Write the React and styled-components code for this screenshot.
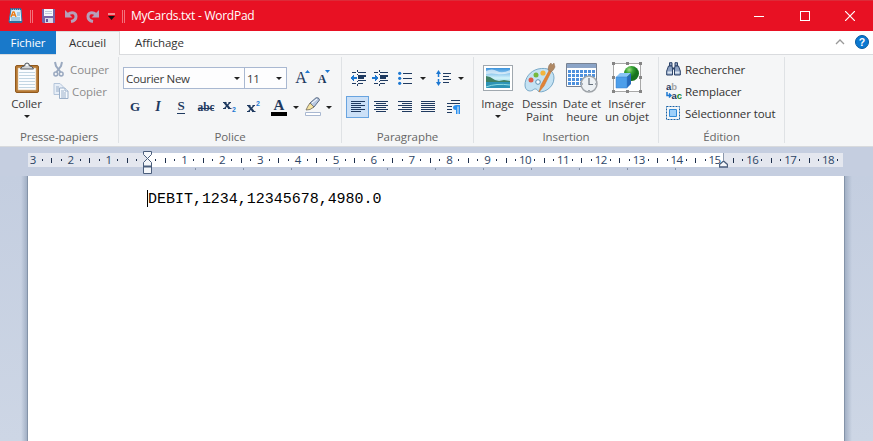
import React from 'react';
import styled, { createGlobalStyle } from 'styled-components';

const GlobalStyle = createGlobalStyle`
  * { box-sizing: border-box; }
  html, body { margin: 0; padding: 0; overflow: hidden; }
  body { font-family: "Open Sans", "Noto Sans", sans-serif; font-size: 11.5px; letter-spacing: -0.08px; color: #3b3b3b; }
  svg { display: block; flex: none; letter-spacing: 0; }
`;

const Window = styled.div`
  width: 873px;
  height: 441px;
  display: flex;
  flex-direction: column;
  overflow: hidden;
  background: #c5cfe0;
`;

const TitleBar = styled.header`
  height: 31px;
  flex: none;
  display: flex;
  align-items: center;
  background: #e81123;
  border-top: 1px solid #dd2b38;
  padding-left: 8px;
  color: #fff;
`;
const QuickIcon = styled.span`
  margin-left: ${p => p.$gap || 0}px;
`;
const Title = styled.span`
  margin-left: 6px;
  font-size: 12px;
  line-height: 16px;
  letter-spacing: -0.26px;
  white-space: nowrap;
`;
const WindowButtons = styled.div`
  margin-left: auto;
  display: flex;
`;
const WindowButton = styled.button`
  width: ${p => p.$w || 46}px;
  height: 28px;
  padding: 0;
  border: 0;
  background: none;
  display: flex;
  align-items: center;
  justify-content: center;
`;

const TabBar = styled.nav`
  height: 24px;
  flex: none;
  display: flex;
  background: #fff;
  border-bottom: 1px solid #d9dbde;
`;
const Tab = styled.div`
  width: ${p => p.$w}px;
  height: ${p => (p.$kind === 'active' ? 24 : 23)}px;
  text-align: center;
  line-height: ${p => (p.$kind === 'active' ? 21 : 23)}px;
  white-space: nowrap;
  color: ${p => (p.$kind === 'file' ? '#fff' : '#333')};
  background: ${p => ({ file: '#1979ca', active: '#f5f6f7' }[p.$kind] || 'transparent')};
  border: 0 solid #dadbdc;
  border-width: ${p => (p.$kind === 'active' ? '1px 1px 0 0' : 0)};
`;
const TabTools = styled.div`
  margin-left: auto;
  display: flex;
  align-items: center;
  gap: 10px;
  padding: 0 4px 2px 0;
`;

const Ribbon = styled.section`
  height: 92px;
  flex: none;
  display: flex;
  background: #f5f6f7;
  border-bottom: 1px solid #d8dadd;
`;
const Group = styled.div`
  width: ${p => p.$w}px;
  height: 86px;
  margin-top: 2px;
  border-right: 1px solid #dfe2e5;
  display: flex;
  flex-direction: column;
`;
const GroupBody = styled.div`
  height: 71px;
  flex: none;
  display: flex;
  padding-left: ${p => p.$left || 0}px;
`;
const GroupName = styled.div`
  text-align: center;
  line-height: 18px;
  color: #666;
`;
const BigButton = styled.div`
  width: ${p => p.$w}px;
  padding-top: 5px;
  display: flex;
  flex-direction: column;
  align-items: center;
`;
const BigLabel = styled.div`
  margin-top: 3px;
  text-align: center;
  line-height: 13px;
  white-space: nowrap;
`;
const Arrow = styled.i`
  width: 0;
  height: 0;
  flex: none;
  margin-top: ${p => p.$top || 0}px;
  border: 3px solid transparent;
  border-top-color: #222;
  border-bottom: 0;
`;
const Commands = styled.div`
  display: flex;
  flex-direction: column;
  padding-top: 1px;
`;
const Command = styled.div`
  height: 22px;
  display: flex;
  align-items: center;
  gap: ${p => p.$gap}px;
  color: ${p => (p.$disabled ? '#8c8c8c' : '#333')};
  white-space: nowrap;
`;
const ToolRows = styled.div`
  display: flex;
  flex-direction: column;
  padding-top: 10px;
  gap: 7px;
`;
const ToolRow = styled.div`
  height: 22px;
  display: flex;
  align-items: center;
`;
const Combo = styled.div`
  width: ${p => p.$w}px;
  height: 22px;
  border: 1px solid #a9b8d1;
  border-left-width: ${p => (p.$joined ? 0 : 1)}px;
  background: #fdfdfe;
  display: flex;
  align-items: center;
  justify-content: space-between;
  padding: 0 4px 0 2px;
  letter-spacing: -0.3px;
`;
const Tool = styled.span`
  width: ${p => p.$w}px;
  height: 22px;
  display: flex;
  align-items: center;
  justify-content: center;
  background: ${p => (p.$on ? '#cbe0f7' : 'transparent')};
  outline: ${p => (p.$on ? '1px solid #68a4e0' : 'none')};
  outline-offset: -1px;
`;

const RulerArea = styled.div`
  height: 29px;
  flex: none;
  padding: 6px 30px 0 28px;
  background: #c5cee0;
  position: relative;
`;
const RulerStrip = styled.div`
  height: 14px;
  display: grid;
  grid-template-columns: repeat(86, 9.47px);
  align-items: center;
  justify-items: center;
  overflow: hidden;
  background: linear-gradient(90deg, #e4e7ef 119px, #fff 119px, #fff 696px, #e4e7ef 696px);
`;
const RulerNumber = styled.span`
  width: 20px;
  margin: 0 -6px;
  text-align: center;
  font-size: 11.5px;
  line-height: 14px;
  letter-spacing: -0.5px;
  color: #2d4566;
`;
const RulerMark = styled.span`
  width: 1px;
  height: ${p => (p.$long ? 5 : 2)}px;
  background: #1d2f4c;
`;
const TabStops = styled.div`
  display: flex;
  gap: 47px;
  padding: 1px 0 0 167px;
`;
const TabStop = styled.span`
  width: 1px;
  height: 2px;
  flex: none;
  background: #8794aa;
`;
const Marker = styled.span`
  position: absolute;
  left: ${p => p.$x}px;
  top: ${p => p.$y}px;
`;

const Desk = styled.main`
  flex: 1;
  display: flex;
  background: linear-gradient(#c4cee0, #cdd6e5);
`;
const Edge = styled.div`
  width: ${p => (p.$right ? 8 : 7)}px;
  margin-left: ${p => (p.$right ? 0 : 21)}px;
  background: linear-gradient(${p => (p.$right ? 270 : 90)}deg, rgba(120, 140, 170, 0), #a2b0c5);
  border: 0 solid #8493a8;
  border-width: ${p => (p.$right ? '0 0 0 1px' : '0 1px 0 0')};
`;
const Page = styled.div`
  width: 816px;
  padding: 14px 0 0 119px;
  background: #fff;
`;
const TextLine = styled.div`
  height: 17px;
  padding-top: 1px;
  display: flex;
  align-items: center;
  border-left: 1px solid #000;
  font: 15px/17px "Liberation Mono", "Courier New", monospace;
  letter-spacing: -0.02px;
  color: #000;
`;

const navy = '#1f3a60';
const blue = '#1d78d2';

const Lines = ({ rows }) => (
  <svg width="14" height="12" shapeRendering="crispEdges">
    {rows.map(([x, len], i) => <rect key={i} x={x} y={i * 2} width={len} height="1" fill={navy} />)}
  </svg>
);

const AppIcon = () => (
  <svg width="15" height="16" viewBox="0 0 15 16">
    <path d="M3 1h10l1 13H1z" fill="#deeffa" stroke="#347fae" />
    <path d="M2 1h11" stroke="#276e9b" strokeWidth="2" strokeDasharray="1 1" />
    <path d="M3 9l2-5h1l2 5M4 7h3" fill="none" stroke="#ee7c16" strokeWidth="1.3" />
    <path d="M9 5h3M9 7h3M3 10h9M3 12h9" stroke="#6ba7cf" />
    <path d="M1 14h13" stroke="#2d709c" strokeWidth="2" />
  </svg>
);
const Divider = () => (
  <svg width="3" height="13" shapeRendering="crispEdges"><path d="M.5 0v13M2.5 0v13" stroke="#f2727b" /></svg>
);
const SaveIcon = () => (
  <svg width="13" height="14" viewBox="0 0 13 14">
    <path d="M0 0h13v14H1L0 13z" fill="#7764a7" /><path d="M2 0h9v7H2z" fill="#f4f7fc" />
    <path d="M3 2.500h7M3 4.500h7" stroke="#c0cadb" /><path d="M3 9h8v5H3z" fill="#d7d9e8" /><path d="M4 10h2v3H4z" fill="#65539b" />
  </svg>
);
const UndoIcon = ({ flip }) => (
  <svg width="13" height="14" viewBox="0 0 13 14">
    <g transform={flip ? 'translate(13 0) scale(-1 1)' : undefined}>
      <path d="M3 5.500C7 2 11 4 11 7.500c0 3-2 4.500-5 5" fill="none" stroke="#b69fb9" strokeWidth="3" />
      <path d="M0 1v7.500h7.500z" fill="#b69fb9" />
    </g>
  </svg>
);
const MenuIcon = () => (
  <svg width="7" height="7"><path d="M0 1h7" stroke="#fff" /><path d="M0 3h7L3.500 7z" fill="#111" /></svg>
);

const PasteIcon = () => (
  <svg width="26" height="32" viewBox="0 0 26 32">
    <rect x="1.500" y="3.500" width="23" height="27" rx="1.500" fill="#b77a34" stroke="#91591e" />
    <path d="M4 6h18v22H4z" fill="#fbfdff" stroke="#dac19b" strokeWidth=".6" />
    <path d="M5 10.500h16M5 13.500h16M5 16.500h16M5 19.500h16M5 22.500h16M5 25.500h16" stroke="#c3d6e3" />
    <path d="M6.500 7q1-3 4-3 0-3 2.500-3t2.500 3q3 0 4 3z" fill="#d3d6d9" stroke="#545b62" />
    <circle cx="13" cy="3" r="1" fill="#fff" />
  </svg>
);
const CutIcon = () => (
  <svg width="11" height="16" viewBox="0 0 11 16" fill="none" stroke="#9aa9c0">
    <path d="M2 1l1 4 4.500 6M9 1L8 5l-4.500 6" strokeWidth="2" />
    <circle cx="2.800" cy="13" r="1.900" strokeWidth="1.500" /><circle cx="8.200" cy="13" r="1.900" strokeWidth="1.500" />
  </svg>
);
const CopyIcon = () => (
  <svg width="16" height="16" viewBox="0 0 16 16" stroke="#9bb0ca" fill="#f5f9fd">
    <path d="M1 .500h6l3 3v8H1z" fill="#e7eef7" stroke="#b4c5da" /><path d="M3 4h3M3 6h4M3 8h3" />
    <path d="M6.500 5h5.500l3 3v7.500H6.500z" /><path d="M12 5v3h3M8 8h3M8 10h5M8 12h5M8 14h5" />
  </svg>
);
const Letter = ({ ch, w = 18, size = 13, bold = 700, italic, line, y = 14, x, children }) => (
  <svg width={w} height="20">
    <text x={x ?? w / 2} y={y} textAnchor="middle" fontFamily="Liberation Serif" fontSize={size} fontWeight={bold} fontStyle={italic ? 'italic' : 'normal'} fill={navy}>{ch}</text>
    {line && <path d={line} stroke={navy} />}
    {children}
  </svg>
);
const ScriptIcon = ({ up }) => (
  <svg width="14" height="20" viewBox="0 0 14 20">
    <g transform={`translate(0 ${up ? 8 : 5})`} stroke={navy}>
      <path d="M1.500 .500l5 6" strokeWidth="2" /><path d="M7 .500l-5.500 6" strokeWidth="1.200" />
      <path d="M0 .500h3.500M5.500 .500H8M0 6.500h3M5 6.500h3.500" />
    </g>
    <text x="9" y={up ? 9 : 15} fontFamily="Liberation Sans" fontSize="7" fontWeight="700" fill={blue}>2</text>
  </svg>
);
const PenIcon = () => (
  <svg width="18" height="20" viewBox="0 0 18 20">
    <path d="M6 6L12 .800q3-.800 3.500 2.200L10 10l-4 1z" fill="#b9c9e2" stroke="#5a6b85" />
    <path d="M8 6l5-4" stroke="#fff" />
    <path d="M6 6l4 4-4 2.500-4 .500L4 9z" fill="#f5e3a2" stroke="#716a56" strokeWidth=".8" />
    <path d="M1.500 15.500h15v3h-15z" fill="#fff" stroke="#a9b8d1" />
  </svg>
);
const IndentIcon = ({ right }) => (
  <svg width="17" height="16" viewBox="0 0 17 16" shapeRendering="crispEdges">
    <path d="M2 2.500h4M8 2.500h8M8 10.500h8M2 13.500h4M8 13.500h5" stroke={navy} />
    <path d="M8 5.500h8M8 8h6" stroke={navy} strokeWidth="2" /><path d="M7.500 0v2M7.500 4v1M7.500 11v1M7.500 14v2" stroke={navy} />
    <path d={right ? 'M0 8h5' : 'M2 8h5'} stroke={blue} strokeWidth="2" />
    <path d={right ? 'M3 4.500L7 8l-4 3.500z' : 'M4 4.500L0 8l4 3.500z'} fill={blue} />
  </svg>
);
const BulletIcon = () => (
  <svg width="15" height="14"><path d="M5 2.500h9M5 7.500h9M5 12.500h9" stroke={navy} />
    {[2, 7, 12].map(y => <circle key={y} cx="1.700" cy={y + .3} r="1.600" fill={blue} />)}</svg>
);
const SpacingIcon = () => (
  <svg width="16" height="16"><path d="M7 3.500h8M7 6.500h6M7 9.500h8M7 12.500h6" stroke={navy} />
    <path d="M2.500 3v10" stroke={blue} strokeWidth="1.500" strokeDasharray="4 2" /><path d="M2.500 0L0 4h5zM2.500 16L0 12h5z" fill={blue} /></svg>
);
const ParagraphIcon = () => (
  <svg width="14" height="14" viewBox="0 0 14 14"><path d="M4 .500h9M0 3.500h13M0 6.500h5M0 9.500h5M0 12.500h5" stroke={navy} />
    <path d="M12.500 5H9.500Q6 5 6 7.500T9 10v4h1.500V6.500h1V14H13V5z" fill="#2a90f0" /></svg>
);

const ImageIcon = () => (
  <svg width="32" height="32" viewBox="0 0 32 32">
    <defs><linearGradient id="sky" x2="0" y2="1"><stop stopColor="#3a92dc" /><stop offset=".5" stopColor="#d3f3fb" /><stop offset="1" stopColor="#39a8bd" /></linearGradient></defs>
    <rect x="1.500" y="3.500" width="29" height="25" fill="#fff" stroke="#a0a8af" /><path d="M4 6h24v20H4z" fill="url(#sky)" />
    <path d="M4 9q6-3 11 0t13-1v3q-8 2-13 1T4 12z" fill="#fff" opacity=".6" />
    <path d="M4 14l4 1 5 3 4 1 5-1 6 1v2H4z" fill="#3f8062" /><path d="M4 20h24v6H4z" fill="#2d93b5" /><path d="M4 25q10-4 24-2" stroke="#8ddce3" fill="none" />
  </svg>
);
const PaintIcon = () => (
  <svg width="32" height="32" viewBox="0 0 32 32">
    <path d="M14 7C6 9 1 16 1 23c0 6 5 7 8 5 2-2 4-1 5 1 3 3 16-2 16-13 0-8-7-11-16-9z" fill="#c4e2f3" stroke="#79a9c8" />
    <circle cx="14" cy="20" r="2.300" fill="#f6fbff" stroke="#5b90b4" />
    <circle cx="7" cy="18" r="2.500" fill="#df5b4a" /><circle cx="12" cy="13" r="2.500" fill="#75b83d" /><circle cx="19" cy="11" r="2.600" fill="#f2b53d" />
    <path d="M26 7l2 1-8 16-5 6 2-7z" fill="#e28334" stroke="#c9732f" strokeWidth=".6" />
    <path d="M24 8q0-5 3-7l1 2 2-2 1 4q-1 3-4 5z" fill="#b08863" stroke="#8e725a" strokeWidth=".5" />
  </svg>
);
const DateIcon = () => (
  <svg width="32" height="32" viewBox="0 0 32 32">
    <path d="M.500 1.500h30v23H.500z" fill="#fff" stroke="#778293" /><path d="M1 2h29v4H1z" fill="#8ba4c7" />
    <path d="M2 8h27v15H2z" fill="#4e91dd" /><path d="M2 11.500h27M2 15.500h27M2 19.500h27M5.500 8v15M9.500 8v15M13.500 8v15M17.500 8v15M21.500 8v15M25.500 8v15" stroke="#fff" />
    <circle cx="23" cy="22" r="8" fill="#edf1f4" stroke="#9ea3a8" strokeWidth="1.500" /><path d="M23 16v6.500h4M23 28v1M16 22h1M29 22h1" fill="none" stroke="#66717c" strokeWidth="1.200" />
  </svg>
);
const ObjectIcon = () => (
  <svg width="32" height="32" viewBox="0 0 32 32">
    <defs><radialGradient id="ball" cx=".35" cy=".25"><stop stopColor="#a2df83" /><stop offset=".5" stopColor="#36a334" /><stop offset="1" stopColor="#18731f" /></radialGradient></defs>
    <path d="M2.500 1.500h27v28h-27z" fill="#fff" stroke="#a8a8a8" />
    <g fill="#858585">{[1, 15, 28].flatMap(x => [0, 14, 28].filter(y => !(x === 15 && y === 14)).map(y => <path key={`${x}-${y}`} d={`M${x} ${y}h3v3h-3z`} />))}</g>
    <circle cx="20.500" cy="11.500" r="7.500" fill="url(#ball)" />
    <path d="M5 15l4-4h11l-4 4z" fill="#8ac5f7" /><path d="M16 15l4-4v11l-4 4z" fill="#286bbc" /><path d="M5 15h11v11H5z" fill="#4d9eea" stroke="#377fcc" strokeWidth=".5" />
  </svg>
);
const FindIcon = () => (
  <svg width="15" height="14" viewBox="0 0 15 14" fill="#8ea2c2" stroke="#2c4368">
    <path d="M3.500 .700h2.500V4H3.500zM9 .700h2.500V4H9z" /><path d="M2.500 4H6l.500 3v6H.700V9zM12.500 4H9l-.500 3v6h5.800V9z" />
    <path d="M1.500 10.500h4.500M9 10.500h4.500" stroke="#dce6f2" strokeWidth="2" /><path d="M6 6.500h3" strokeWidth="2" />
  </svg>
);
const ReplaceIcon = () => (
  <svg width="16" height="18" viewBox="0 0 16 18" fontFamily="Liberation Sans" fontSize="9.500" fontWeight="700" fill={navy}>
    <text x="0" y="8">a<tspan fill="#a4a4a4">b</tspan></text>
    <text x="5.500" y="16.500">a<tspan fill="#16872c">c</tspan></text>
    <path d="M1 10v3.500h3.500M3 11.500l2 2-2 2" fill="none" stroke={blue} strokeWidth="1.500" />
  </svg>
);
const SelectIcon = () => (
  <svg width="14" height="14"><path d="M.500.500h13v13H.500z" fill="none" stroke="#1762a7" strokeDasharray="2 1" />
    <path d="M3.500 3.500h7v7h-7z" fill="#9ed0fa" stroke="#328bd7" /></svg>
);
const HelpIcon = () => (
  <svg width="14" height="14"><circle cx="7" cy="7" r="6.500" fill="#0b78d1" stroke="#075a9e" />
    <text x="7" y="10.800" textAnchor="middle" fontFamily="Liberation Sans" fontWeight="700" fontSize="10.500" fill="#fff">?</text></svg>
);

const slots = Array.from({ length: 86 }, (_, i) => i);
const RulerSlot = ({ i }) => {
  if (i === 12) return <span />;
  if (i % 4 === 0) return <RulerNumber>{Math.abs(i / 4 - 3)}</RulerNumber>;
  return <RulerMark $long={i % 4 === 2} />;
};

export default function App() {
  return (
    <Window>
      <GlobalStyle />
      <TitleBar>
        <AppIcon />
        <QuickIcon $gap={7}><Divider /></QuickIcon>
        <QuickIcon $gap={9}><SaveIcon /></QuickIcon>
        <QuickIcon $gap={10}><UndoIcon /></QuickIcon>
        <QuickIcon $gap={8}><UndoIcon flip /></QuickIcon>
        <QuickIcon $gap={9}><MenuIcon /></QuickIcon>
        <QuickIcon $gap={7}><Divider /></QuickIcon>
        <Title>MyCards.txt - WordPad</Title>
        <WindowButtons>
          <WindowButton><svg width="10" height="10" shapeRendering="crispEdges"><path d="M0 5.500h10" stroke="#fff" /></svg></WindowButton>
          <WindowButton $w={45}><svg width="10" height="10" shapeRendering="crispEdges"><path d="M.500.500h9v9h-9z" fill="none" stroke="#fff" /></svg></WindowButton>
          <WindowButton><svg width="10" height="10"><path d="M0 0l10 10M10 0L0 10" stroke="#fff" strokeWidth="1.200" /></svg></WindowButton>
        </WindowButtons>
      </TitleBar>
      <TabBar>
        <Tab $w={56} $kind="file">Fichier</Tab>
        <Tab $w={64} $kind="active">Accueil</Tab>
        <Tab $w={79}>Affichage</Tab>
        <TabTools>
          <svg width="10" height="6"><path d="M1 5l4-4 4 4" fill="none" stroke="#999" strokeWidth="1.300" /></svg>
          <HelpIcon />
        </TabTools>
      </TabBar>
      <Ribbon>
        <Group $w={119}>
          <GroupBody>
            <BigButton $w={53}><PasteIcon /><BigLabel>Coller</BigLabel><Arrow $top={5} /></BigButton>
            <Commands>
              <Command $gap={6} $disabled><CutIcon />Couper</Command>
              <Command $gap={3} $disabled><CopyIcon />Copier</Command>
            </Commands>
          </GroupBody>
          <GroupName>Presse-papiers</GroupName>
        </Group>
        <Group $w={223}>
          <GroupBody $left={4}>
            <ToolRows>
              <ToolRow>
                <Combo $w={122}>Courier New<Arrow /></Combo>
                <Combo $w={42} $joined>11<Arrow /></Combo>
                <Tool $w={29}><Letter ch="A" size={16} bold={400} y={15} x={8}><path d="M12 5l2.500-3L17 5z" fill={blue} /><path d="M4.500 11h7" stroke={navy} strokeWidth=".5" /></Letter></Tool>
                <Tool $w={16}><Letter ch="A" w={14} size={12} y={15} x={5}><path d="M8 2h5l-2.500 3z" fill={blue} /></Letter></Tool>
              </ToolRow>
              <ToolRow>
                <Tool $w={23}><Letter ch="G" size={13} /></Tool>
                <Tool $w={23}><Letter ch="I" size={14} italic /></Tool>
                <Tool $w={24}><Letter ch="S" bold={700} size={13} y={13} line="M5 16.500h8" /></Tool>
                <Tool $w={25}><Letter ch="abc" bold={700} size={11.5} line="M1 11.500h16" /></Tool>
                <Tool $w={24}><ScriptIcon /></Tool>
                <Tool $w={23}><ScriptIcon up /></Tool>
                <Tool $w={28}><Letter ch="A" size={15} y={13}><path d="M1 15h16v4H1z" /></Letter></Tool>
                <Tool $w={6}><Arrow /></Tool>
                <Tool $w={27}><PenIcon /></Tool>
                <Tool $w={6}><Arrow /></Tool>
              </ToolRow>
            </ToolRows>
          </GroupBody>
          <GroupName>Police</GroupName>
        </Group>
        <Group $w={132}>
          <GroupBody $left={4}>
            <ToolRows>
              <ToolRow>
                <Tool $w={24}><IndentIcon /></Tool>
                <Tool $w={21}><IndentIcon right /></Tool>
                <Tool $w={29}><BulletIcon /></Tool>
                <Tool $w={6}><Arrow /></Tool>
                <Tool $w={35}><SpacingIcon /></Tool>
                <Tool $w={0}><Arrow /></Tool>
              </ToolRow>
              <ToolRow>
                <Tool $w={23} $on><Lines rows={[[0, 14], [0, 10], [0, 14], [0, 10], [0, 14], [0, 10]]} /></Tool>
                <Tool $w={24}><Lines rows={[[0, 14], [2, 10], [0, 14], [2, 10], [0, 14], [2, 10]]} /></Tool>
                <Tool $w={24}><Lines rows={[[0, 14], [4, 10], [0, 14], [4, 10], [0, 14], [4, 10]]} /></Tool>
                <Tool $w={22}><Lines rows={[[0, 14], [0, 14], [0, 14], [0, 14], [0, 14], [0, 14]]} /></Tool>
                <Tool $w={29}><ParagraphIcon /></Tool>
              </ToolRow>
            </ToolRows>
          </GroupBody>
          <GroupName>Paragraphe</GroupName>
        </Group>
        <Group $w={185}>
          <GroupBody $left={3}>
            <BigButton $w={41}><ImageIcon /><BigLabel>Image</BigLabel><Arrow $top={5} /></BigButton>
            <BigButton $w={43}><PaintIcon /><BigLabel>Dessin<br />Paint</BigLabel></BigButton>
            <BigButton $w={42}><DateIcon /><BigLabel>Date et<br />heure</BigLabel></BigButton>
            <BigButton $w={48}><ObjectIcon /><BigLabel>Insérer<br />un objet</BigLabel></BigButton>
          </GroupBody>
          <GroupName>Insertion</GroupName>
        </Group>
        <Group $w={126}>
          <GroupBody $left={7}>
            <Commands>
              <Command $gap={4}><FindIcon />Rechercher</Command>
              <Command $gap={3}><ReplaceIcon />Remplacer</Command>
              <Command $gap={5}><SelectIcon />Sélectionner tout</Command>
            </Commands>
          </GroupBody>
          <GroupName>Édition</GroupName>
        </Group>
      </Ribbon>
      <RulerArea>
        <RulerStrip>{slots.map(i => <RulerSlot key={i} i={i} />)}</RulerStrip>
        <TabStops>{Array.from({ length: 11 }, (_, i) => <TabStop key={i} />)}</TabStops>
        <Marker $x={143} $y={4}>
          <svg width="9" height="23" fill="#f5f7fa" stroke="#4b5e7c">
            <path d="M.500.500h8v3l-4 4-4-4zM4.500 7.500l4 4v4h-8v-4zM.500 15.500h8v7h-8z" />
            <path d="M0 15.500h9" strokeWidth="2" />
          </svg>
        </Marker>
        <Marker $x={719} $y={6}>
          <svg width="9" height="15" fill="#f5f7fa" stroke="#4b5e7c"><path d="M4.500 8l4 3.500v2.500h-8v-2.500z" strokeWidth="1.300" /><path d="M4.500 0v8" stroke="#8b98ac" /></svg>
        </Marker>
      </RulerArea>
      <Desk>
        <Edge />
        <Page><TextLine>DEBIT,1234,12345678,4980.0</TextLine></Page>
        <Edge $right />
      </Desk>
    </Window>
  );
}
